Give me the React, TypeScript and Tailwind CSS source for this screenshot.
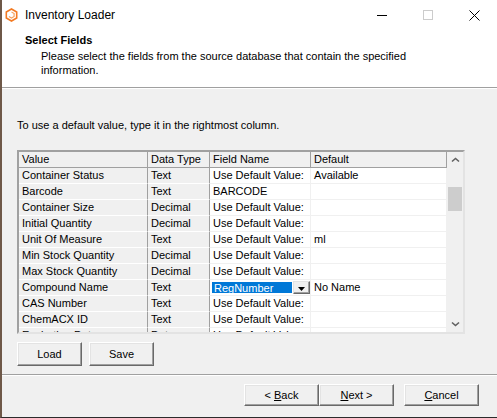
import React from "react";

const font = { fontFamily: '"Liberation Sans", Arial, sans-serif' };

const rows: [string, string, string, string][] = [
  ["Container Status", "Text", "Use Default Value:", "Available"],
  ["Barcode", "Text", "BARCODE", ""],
  ["Container Size", "Decimal", "Use Default Value:", ""],
  ["Initial Quantity", "Decimal", "Use Default Value:", ""],
  ["Unit Of Measure", "Text", "Use Default Value:", "ml"],
  ["Min Stock Quantity", "Decimal", "Use Default Value:", ""],
  ["Max Stock Quantity", "Decimal", "Use Default Value:", ""],
  ["Compound Name", "Text", "__combo", "No Name"],
  ["CAS Number", "Text", "Use Default Value:", ""],
  ["ChemACX ID", "Text", "Use Default Value:", ""],
  ["Expiration Date", "Date", "Use Default Value:", ""],
];

function Chevron({ down }: { down?: boolean }) {
  return (
    <svg width="9" height="6" viewBox="0 0 9 6">
      <path
        d={down ? "M1 1.5 L4.5 4.5 L8 1.5" : "M1 4.5 L4.5 1.5 L8 4.5"}
        fill="none"
        stroke="#606060"
        strokeWidth="1.6"
      />
    </svg>
  );
}

function WinButton({
  children,
  className = "",
}: {
  children: React.ReactNode;
  className?: string;
}) {
  return (
    <div
      className={`flex items-center justify-center bg-[#f0f0f0] border border-t-white border-l-white border-r-[#696969] border-b-[#696969] shadow-[inset_-1px_-1px_0_#a0a0a0,inset_1px_1px_0_#e3e3e3] text-[11px] text-black ${className}`}
    >
      {children}
    </div>
  );
}

function Cell({
  w,
  gray,
  header,
  children,
}: {
  w: string;
  gray?: boolean;
  header?: boolean;
  children?: React.ReactNode;
}) {
  const bg = gray || header ? "bg-[#f0f0f0]" : "bg-white";
  const br = gray || header ? "border-r-[#a0a0a0]" : "border-r-[#f0f0f0]";
  const bb = header
    ? "border-b-[#a0a0a0]"
    : gray
    ? "border-b-white"
    : "border-b-[#f0f0f0]";
  return (
    <div
      className={`${w} h-[16px] shrink-0 border-r border-b ${bg} ${br} ${bb} pl-[3px] leading-[15px] whitespace-nowrap overflow-hidden`}
    >
      {children}
    </div>
  );
}

function Combo() {
  return (
    <div className="w-[101px] h-[16px] shrink-0 border-r border-b border-r-[#f0f0f0] border-b-[#f0f0f0] bg-white flex items-stretch pl-[1px] py-[1px]">
      <div className="flex-1 bg-[#0078d7] text-white pl-[2px] leading-[13px] border border-white">
        RegNumber
      </div>
      <div className="w-[17px] flex items-center justify-center bg-[#f0f0f0] border border-t-[#e3e3e3] border-l-[#e3e3e3] border-r-[#696969] border-b-[#696969] shadow-[inset_-1px_-1px_0_#a0a0a0]">
        <svg width="7" height="4" viewBox="0 0 7 4" className="mt-[2px]">
          <path d="M0 0 H7 L3.5 4 Z" fill="#000" />
        </svg>
      </div>
    </div>
  );
}

export default function App() {
  return (
    <div
      style={font}
      className="w-[497px] h-[418px] bg-[#f0f0f0] border-l-2 border-l-[#6e5848] border-b border-b-[#2b2b2b] flex flex-col text-[11px] text-black overflow-hidden"
    >
      {/* title bar */}
      <div className="h-[30px] bg-white flex items-center shrink-0">
        <svg width="13" height="14" viewBox="0 0 13 14" className="ml-[3px]">
          <path
            d="M6.5 1 L11.7 4 V10 L6.5 13 L1.3 10 V4 Z"
            fill="none"
            stroke="#f37a22"
            strokeWidth="1.6"
          />
          <path
            d="M6.5 4 L9.1 5.5 V8.5 L6.5 10 L3.9 8.5"
            fill="none"
            stroke="#f7a25e"
            strokeWidth="1.2"
          />
        </svg>
        <span className="ml-[7px] text-[12px]">Inventory Loader</span>
        <div className="ml-auto flex h-full">
          <div className="w-[46px] flex items-center justify-center">
            <div className="w-[10px] h-px bg-black" />
          </div>
          <div className="w-[46px] flex items-center justify-center">
            <div className="w-[10px] h-[10px] border border-[#cccccc]" />
          </div>
          <div className="w-[46px] flex items-center justify-center">
            <svg width="11" height="11" viewBox="0 0 11 11">
              <path d="M0.5 0.5 L10.5 10.5 M10.5 0.5 L0.5 10.5" stroke="#000" strokeWidth="1" />
            </svg>
          </div>
        </div>
      </div>

      {/* header */}
      <div className="h-[57px] bg-white shrink-0 pl-[23px] pt-[4px]">
        <div className="font-bold leading-[13px]">Select Fields</div>
        <div className="pl-[16px] mt-[2px] leading-[14px]">
          Please select the fields from the source database that contain the specified
          <br />
          information.
        </div>
      </div>
      <div className="h-px bg-[#a0a0a0] shrink-0" />
      <div className="h-px bg-white shrink-0" />

      {/* body */}
      <div className="pl-[15px] mt-[30px] leading-[13px] shrink-0">
        To use a default value, type it in the rightmost column.
      </div>

      <div className="ml-[15px] mt-[18px] w-[448px] h-[184px] shrink-0 border-2 border-t-[#a0a0a0] border-l-[#a0a0a0] border-b-[#e3e3e3] border-r-[#e3e3e3] flex">
        <div className="w-[428px] overflow-hidden">
          <div className="flex">
            <Cell w="w-[129px]" header>Value</Cell>
            <Cell w="w-[62px]" header>Data Type</Cell>
            <Cell w="w-[101px]" header>Field Name</Cell>
            <Cell w="w-[136px]" header>Default</Cell>
          </div>
          {rows.map(([v, t, f, d]) => (
            <div key={v} className="flex">
              <Cell w="w-[129px]" gray>{v}</Cell>
              <Cell w="w-[62px]" gray>{t}</Cell>
              {f === "__combo" ? <Combo /> : <Cell w="w-[101px]">{f}</Cell>}
              <Cell w="w-[136px]">{d}</Cell>
            </div>
          ))}
        </div>
        <div className="w-[16px] bg-[#f0f0f0] flex flex-col">
          <div className="h-[16px] flex items-center justify-center">
            <Chevron />
          </div>
          <div className="mt-[19px] h-[24px] mx-[1px] bg-[#cdcdcd]" />
          <div className="flex-1" />
          <div className="h-[16px] flex items-center justify-center">
            <Chevron down />
          </div>
        </div>
      </div>

      <div className="ml-[15px] mt-[8px] flex gap-[7px] shrink-0">
        <WinButton className="w-[65px] h-[24px]">Load</WinButton>
        <WinButton className="w-[65px] h-[24px]">Save</WinButton>
      </div>

      <div className="mt-[8px] h-px bg-[#a0a0a0] shrink-0" />
      <div className="h-px bg-white shrink-0" />

      <div className="mt-[8px] flex justify-end pr-[18px] shrink-0">
        <WinButton className="w-[75px] h-[22px]">
          &lt; <span className="underline ml-[3px]">B</span>ack
        </WinButton>
        <WinButton className="w-[75px] h-[22px]">
          <span className="underline">N</span>ext &gt;
        </WinButton>
        <WinButton className="w-[75px] h-[22px] ml-[10px]">
          <span className="underline">C</span>ancel
        </WinButton>
      </div>
    </div>
  );
}
